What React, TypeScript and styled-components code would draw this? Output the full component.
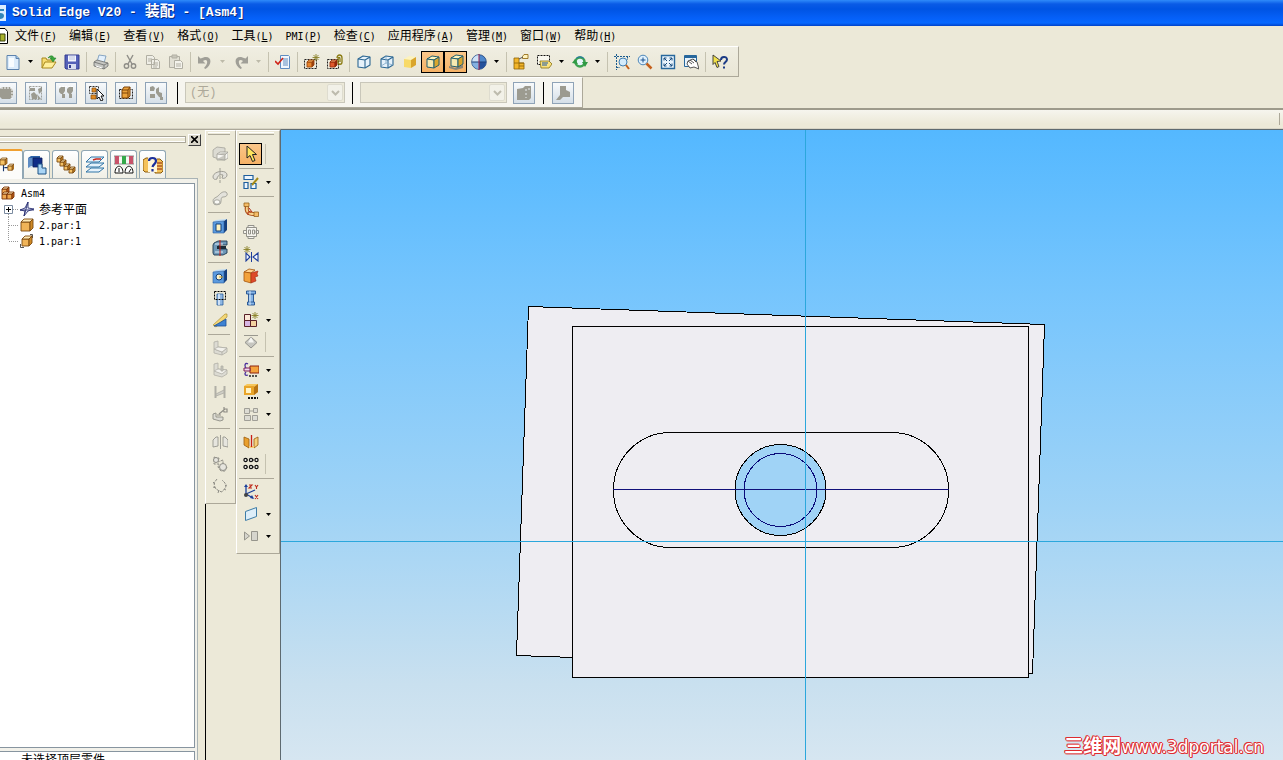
import React from 'react';
import styled, { createGlobalStyle, css } from 'styled-components';

const Global = createGlobalStyle`
  *, *::before, *::after { box-sizing: border-box; }
  html, body { margin: 0; height: 100%; }
  body { background: #ece9d8; overflow: hidden; }
  button, select, ul { margin: 0; padding: 0; }
  button, select { font: inherit; color: inherit; border: 0; background: none; }
`;

const uiFont = '"Liberation Mono", "Noto Sans CJK SC", monospace';

/* ---------- shell ---------- */
const Shell = styled.div`
  display: flex;
  flex-direction: column;
  height: 100vh;
  overflow: hidden;
  font-family: ${uiFont};
  font-size: 12px;
  color: #000;
  background: #ece9d8;
`;
const Latin = styled.span`
  font-family: "DejaVu Sans Mono", monospace;
  font-size: 10px;
`;
const TitleBar = styled.header`
  display: flex;
  align-items: center;
  gap: 6px;
  height: 26px;
  flex: none;
  background: linear-gradient(#2f8bfa 0, #0a5be6 4px, #0054e3 9px, #0560f8 18px, #0668ff 23px, #0042c8 26px);
`;
const TitleText = styled.h1`
  margin: 0;
  font: bold 13px/24px ${uiFont};
  color: #fff;
  white-space: pre;
  text-shadow: 1px 1px 0 #0a2a80;
`;
const Wide = styled.span`
  font-size: 15px;
`;
const MenuBar = styled.nav`
  display: flex;
  align-items: center;
  height: 20px;
  flex: none;
`;
const MenuItem = styled.button`
  padding: 2px 6px 0;
  line-height: 18px;
  white-space: nowrap;
`;
const DocIcon = styled.span`
  width: 9px;
  height: 16px;
  flex: none;
`;

/* ---------- toolbars ---------- */
const ToolRow = styled.div`
  display: flex;
  flex: none;
`;
const Toolbar = styled.div<{ $light?: boolean }>`
  display: flex;
  align-items: center;
  flex: none;
  height: 31px;
  border-top: 1px solid #fff;
  border-bottom: 1px solid #aca899;
  border-right: 1px solid #aca899;
  ${p =>
    p.$light
      ? css`
          padding-right: 8px;
          background: #f6f5ef;
        `
      : css`
          padding: 0 7px 0 1px;
          background: linear-gradient(#f0eee2, #e9e6d5);
        `}
`;
const ToolButton = styled.button<{ $active?: boolean }>`
  display: flex;
  align-items: center;
  justify-content: center;
  width: 23px;
  height: 22px;
  flex: none;
  ${p =>
    p.$active &&
    css`
      background: linear-gradient(#fbc88c, #f5b063);
      outline: 1px solid #000;
      outline-offset: -1px;
    `}
`;
const Drop = styled.button`
  display: flex;
  align-items: center;
  justify-content: center;
  width: 13px;
  height: 22px;
  flex: none;
`;
const VLine = styled.span`
  width: 1px;
  height: 20px;
  margin: 0 2px 0 3px;
  background: #c5c2b0;
  flex: none;
`;
const HLine = styled.span`
  height: 1px;
  margin: 3px 0 2px;
  background: #aca899;
  flex: none;
`;
const BlackLine = styled.span<{ $gap: number }>`
  width: 1px;
  height: 22px;
  margin: 0 ${p => p.$gap}px;
  background: #000;
  flex: none;
`;
const PlateGroup = styled.div`
  display: flex;
  gap: 8px;
  margin-left: -5px;
  margin-right: 3px;
`;
const Plate = styled.button`
  display: flex;
  align-items: center;
  justify-content: center;
  width: 22px;
  height: 22px;
  border: 1px solid #8fa3b7;
  background: linear-gradient(#f8fafb, #d5dfe8);
  flex: none;
`;
const SelectBox = styled.label<{ $w: number }>`
  position: relative;
  display: flex;
  width: ${p => p.$w}px;
  height: 21px;
  margin-right: ${p => (p.$w < 150 ? 6 : 0)}px;
  border: 1px solid #c9c7ba;
  background: #ece9d8;
`;
const Select = styled.select`
  appearance: none;
  width: 100%;
  padding-left: 4px;
  color: #aca899;
  opacity: 1;
  font-size: 12px;
`;
const SelectArrow = styled.span`
  position: absolute;
  top: 1px;
  right: 1px;
  bottom: 1px;
  width: 16px;
  display: flex;
  align-items: center;
  justify-content: center;
  border: 1px solid #dedccf;
  border-radius: 2px;
  background: #f2f1e8;
  pointer-events: none;
`;
const PromptBar = styled.div`
  display: flex;
  flex: none;
  height: 21px;
  padding: 3px 3px 3px 0;
  border-top: 2px solid #9d9a8b;
  border-bottom: 1px solid #d8d5c6;
  background: linear-gradient(#f6f5ee, #ece9d8 14px);
`;
const PromptField = styled.output`
  flex: 1;
  border-right: 1px solid #aca899;
`;

/* ---------- work area ---------- */
const Work = styled.main`
  display: flex;
  flex: 1;
  min-height: 0;
`;
const PathFinder = styled.aside`
  display: flex;
  flex-direction: column;
  width: 205px;
  flex: none;
  padding-right: 4px;
  border-top: 1px solid #aca899;
`;
const PanelHead = styled.div`
  display: flex;
  align-items: center;
  gap: 2px;
  height: 19px;
  flex: none;
`;
const Grip = styled.span`
  flex: 1;
  height: 7px;
  border: solid #aca899;
  border-width: 1px 1px 1px 0;
  background: linear-gradient(#fff 1px, transparent 1px 4px, #fff 4px);
`;
const Close = styled.button`
  display: flex;
  align-items: center;
  justify-content: center;
  width: 13px;
  height: 12px;
  border: 1px solid #404040;
  border-top-color: #fff;
  border-left-color: #fff;
  background: #d8d5c8;
`;
const Tabs = styled.div`
  display: flex;
  align-items: flex-end;
  gap: 2px;
  height: 29px;
  flex: none;
`;
const Tab = styled.button<{ $on?: boolean }>`
  display: flex;
  align-items: center;
  justify-content: center;
  width: 27px;
  height: 28px;
  border: 1px solid #91a7b4;
  border-bottom: 0;
  border-radius: 3px 3px 0 0;
  background: linear-gradient(#fff, #f0efe6);
  ${p =>
    p.$on &&
    css`
      width: 23px;
      height: 30px;
      margin: 0 -2px -1px 0;
      padding-right: 8px;
      border-left: 0;
      border-top: 2px solid #f0a030;
      border-radius: 0 3px 0 0;
      background: #fcfcfa;
      z-index: 1;
    `}
`;
const TabPage = styled.div`
  display: flex;
  flex-direction: column;
  gap: 3px;
  flex: 1;
  min-height: 0;
  margin-right: 3px;
  padding: 4px 2px 0 0;
  border: solid #a9b3b5;
  border-width: 1px 1px 0 0;
  background: #f2f1ea;
`;
const Tree = styled.ul`
  flex: 1;
  min-height: 0;
  padding-top: 1px;
  list-style: none;
  background: #fff;
  border: solid #8795a0;
  border-width: 1px 1px 1px 0;
`;
const Node = styled.li<{ $root?: boolean }>`
  display: flex;
  align-items: center;
  gap: ${p => (p.$root ? 6 : 4)}px;
  height: 16px;
  padding-left: ${p => (p.$root ? 1 : 4)}px;
  white-space: nowrap;
`;
const Message = styled.div`
  height: 9px;
  flex: none;
  overflow: hidden;
  padding-left: 21px;
  line-height: 18px;
  border: solid #8795a0;
  border-width: 1px 1px 0 0;
  background: #fff;
`;
const Docks = styled.div`
  display: flex;
  align-items: stretch;
  flex: none;
  width: 76px;
  border-top: 1px solid #aca899;
  border-right: 1px solid #5e6a70;
`;
const DockColumn = styled.div<{ $w: number }>`
  display: flex;
  flex-direction: column;
  width: ${p => p.$w}px;
  flex: none;
`;
const Dock = styled.div`
  display: flex;
  flex-direction: column;
  padding: 1px 5px 6px 2px;
  border: 1px solid #fff;
  border-right-color: #aca899;
  border-bottom-color: #aca899;
`;
const DockGrip = styled.span`
  height: 3px;
  margin-bottom: 8px;
  border-top: 1px solid #fff;
  border-bottom: 1px solid #aca899;
`;
const DockRow = styled.div`
  display: flex;
  align-items: center;
  height: 22px;
`;
const DockTail = styled.div`
  flex: 1;
  border-left: 1px solid #000;
`;
const Viewport = styled.section`
  position: relative;
  flex: 1;
  min-width: 0;
  overflow: hidden;
  border-top: 1px solid #5e6a70;
  background: linear-gradient(#54b8ff 0, #76c5fd 26%, #9fd3f6 60%, #c9e0ef 88%, #d6e6f1 100%);
`;
const Canvas = styled.svg`
  display: block;
  width: 100%;
  height: 100%;
`;
const Watermark = styled.a`
  position: absolute;
  right: 19px;
  bottom: 2px;
  font: 17px/22px "DejaVu Sans", "Noto Sans CJK SC", sans-serif;
  color: #fff;
  text-decoration: none;
  white-space: nowrap;
  text-shadow: 1px 0 #dd2b30, -1px 0 #dd2b30, 0 1px #dd2b30, 0 -1px #dd2b30, 1px 1px #e5474a, -1px -1px #e5474a;
`;
const WatermarkName = styled.b`
  font-size: 19px;
`;

/* ---------- drawings ---------- */
type BoxProps = { x: number; y: number; s: number; d?: number; f?: string; t?: string; r?: string; l?: string };
const Box = ({ x, y, s, d = 3, f = '#f5c265', t = '#ffeab5', r = '#cf8a26', l = '#7c4a10' }: BoxProps) => (
  <g stroke={l} strokeWidth=".9" strokeLinejoin="round">
    <path d={`M${x} ${y + d}h${s}v${s}h${-s}z`} fill={f} />
    <path d={`M${x} ${y + d}l${d} ${-d}h${s}l${-d} ${d}z`} fill={t} />
    <path d={`M${x + s} ${y + d}l${d} ${-d}v${s}l${-d} ${d}z`} fill={r} />
  </g>
);
const Triangle = ({ off }: { off?: boolean }) => (
  <svg width="5" height="3" viewBox="0 0 5 3"><path d="M0 0h5L2.500 3z" fill={off ? '#bdbaa9' : '#000'} /></svg>
);
const Chevron = () => (
  <svg width="9" height="6" viewBox="0 0 9 6"><path d="M1 1l3.500 3.500L8 1" fill="none" stroke="#bdbbad" strokeWidth="2" /></svg>
);

const G = '#8f8e88';
const glassCube = (inner: boolean) => (
  <g fill="#e6f2fb" stroke="#2c6692" strokeWidth="1.100" strokeLinejoin="round">
    <path d="M2 5l5-3 7 1v8l-5 3-7-1z" />
    <path d="M2 5l7 1 5-3M9 6v8" fill="none" />
    {inner && <path d="M2 12l5-3 7 2M7 2v7" fill="none" stroke="#7ba6c6" strokeWidth=".8" />}
  </g>
);
const solidCube = (edges: boolean) => (
  <g stroke={edges ? '#236070' : 'none'} strokeLinejoin="round">
    <path d="M2 5l5-3 7 1-5 3z" fill="#fdf3bd" />
    <path d="M2 5l7 1v8l-7-1z" fill={edges ? '#f7e9b0' : '#f8da68'} />
    <path d="M9 6l5-3v8l-5 3z" fill="#d9a52c" />
  </g>
);
const plateBlue = (hole: React.ReactNode) => (
  <>
    <path d="M1 4l3-2 11-1-3 2z" fill="#b9daf8" />
    <path d="M12 3l3-2v11l-3 3z" fill="#16407e" />
    <path d="M1 4l11-1v12l-11 0z" fill="#5b9ade" stroke="#2a5d9f" strokeWidth=".6" />
    {hole}
  </>
);
const star = <path d="M12 0v7M8.500 3.500h7M9.500 1l5 5M14.500 1l-5 5" stroke="#8a8128" strokeWidth=".9" />;

const art: Record<string, React.ReactNode> = {
  file: <><path d="M2 1.500h9l3 3v11H2z" fill="#dcecfb" stroke="#5d83ad" /><path d="M4 4h5v9H4z" fill="#f8fcff" /><path d="M11 1.500v3h3" fill="#9cc2e6" stroke="#5d83ad" /></>,
  open: <><path d="M1 14V4h4l1 2h6v2" fill="#f7dc72" stroke="#a8881c" /><path d="M1 14l3-6h11l-4 6z" fill="#ffef9b" stroke="#a8881c" /><path d="M7 4c2-3 5-3 6 0h2l-3 4-3-4h2c-1-1-2-1-4 0z" fill="#39a63b" stroke="#1a7a24" strokeWidth=".5" /></>,
  save: <><path d="M1 1h14v14H2l-1-1z" fill="#5560b8" stroke="#343c90" /><path d="M4 1.500h8v6H4z" fill="#f4f6ff" /><path d="M5 3h6M5 5h6" stroke="#b9c0dd" /><path d="M4 10h8v5H4z" fill="#dadef0" /><path d="M5 11h2v3H5z" fill="#343c90" /></>,
  print: <><path d="M4 8l2-7 7 1-2 7z" fill="#e3f0fc" stroke="#6f93b8" strokeWidth=".8" /><path d="M1 8l3-2 11 3v3l-4 3-10-3z" fill="#c6c7c3" stroke="#6b6c69" strokeWidth=".8" /><path d="M1 8l10 3 4-2M11 11v4" fill="none" stroke="#6b6c69" strokeWidth=".8" /><path d="M3 12l6 2" stroke="#fff" /></>,
  cut: <g fill="none" stroke={G} strokeWidth="1.400"><path d="M5 1l5 9M11 1L6 10" /><circle cx="4.500" cy="12" r="2.200" /><circle cx="11.500" cy="12" r="2.200" /></g>,
  copy: <g fill="#efeee6" stroke="#b1afa3"><path d="M1.500 1.500h6l2 2v7h-8zM6.500 5.500h6l2 2v7h-8z" /><path d="M3 5h4M3 7h3M8 9h5M8 11h5M8 13h4" /></g>,
  paste: <g fill="#e2e0d4" stroke="#b1afa3"><path d="M1.500 2.500h10v11h-10z" /><path d="M4 1h5v3H4z" fill="#c8c6ba" /><path d="M6.500 6.500h6l2 2v6h-8z" fill="#f4f3ec" /><path d="M8 10h5M8 12h5" /></g>,
  undo: <path d="M1 2v7.500h7.500L6 7c4-3 6.500 1 1 7l1.500 1C17 9 14-1 3.500 4.500z" fill="#a09f97" />,
  redo: <path d="M15 2v7.500H7.500L10 7C6 4 3.500 8 9 14l-1.500 1C-1 9 2-1 12.500 4.500z" fill="#a09f97" />,
  props: <><path d="M5.500 1.500h8l1 1v12h-9z" fill="#f2f7fd" stroke="#5f8cc0" /><path d="M8 5h5M8 7h5M8 9h5M8 11h5" stroke="#5f8cc0" /><path d="M0 7l3 3 5-6" fill="none" stroke="#d02418" strokeWidth="1.600" /></>,
  partNew: <><path d="M.5 5.500h12v9H.5z" fill="none" stroke="#222" strokeDasharray="2 1" /><Box x={3} y={6} s={5} d={2} f="#e8842a" t="#f6b060" r="#93380a" l="#a04a10" />{star}</>,
  partPin: <><path d="M.5 5.500h11v9H.5z" fill="none" stroke="#222" strokeDasharray="2 1" /><Box x={3} y={6} s={5} d={2} f="#e0582c" t="#f0a070" r="#8d200a" l="#98300c" /><path d="M10 4c0-4 5-4 5 0v4c0 3-4 3-4 0V5c0-2 2-2 2 0v3" fill="none" stroke="#8a7a10" strokeWidth="1.300" /></>,
  wire: glassCube(false),
  wireHidden: glassCube(true),
  shaded: solidCube(false),
  shadedEdges: solidCube(true),
  shadow: <><path d="M1 12l6 2 8-3v3l-7 2-7-2z" fill="#8b8577" /><g transform="translate(1 -1)">{solidCube(true)}</g></>,
  sphere: <><circle cx="8" cy="8" r="7.300" fill="#4f88cc" stroke="#1b3e78" strokeWidth=".8" /><path d="M8 1a7 7 0 0 0-7 7h7z" fill="#cfe2f6" /><path d="M1 8a7 7 0 0 0 7 7V8z" fill="#85b0e0" /><path d="M8 8h7a7 7 0 0 1-7 7z" fill="#24509a" /><path d="M1 8h14" stroke="#1b3e78" /><path d="M8 0v16" stroke="#a3224b" /></>,
  parts: <><path d="M1 4h5v5h5v6H1z" fill="#f3b62b" stroke="#8d6206" strokeWidth=".8" /><path d="M1 9h5v6M6 9h5M6 12h5" fill="none" stroke="#8d6206" strokeWidth=".8" /><path d="M9.500 2.500l1.500-2h4v4h-5.500z" fill="#fff3bd" stroke="#8d6206" strokeWidth=".8" /><path d="M6 5l4-2" stroke="#555" /></>,
  selectTool: <><path d="M1.500 1.500h12v9h-12z" fill="#f8f7ef" stroke="#111" strokeDasharray="2 1" /><path d="M4 7h9l3 3-3 4H5z" fill="#fae27d" stroke="#86700f" strokeWidth=".8" /><path d="M6 9h6M6 11h5" stroke="#1d57a8" /></>,
  refresh: <><circle cx="8" cy="8" r="4.500" fill="#e8f5fb" stroke="#3fa352" strokeWidth="2.600" /><path d="M0 9l3-4 3 5zM16 8l-3 5-3-5z" fill="#2f9a44" /><path d="M4 4.500a5.500 5.500 0 0 1 8 0" stroke="#1c6fb0" fill="none" /></>,
  zoomArea: <><path d="M2.500 0v16M0 2.500h16M2.500 13.500H6M13.500 2.500V6" stroke="#1c5c8e" strokeDasharray="2 1" fill="none" /><circle cx="9" cy="8" r="4" fill="#d4ebfb" stroke="#3f7fb5" /><path d="M12 11l3 4" stroke="#c5601b" strokeWidth="2" /></>,
  zoom: <><circle cx="6" cy="6" r="4.800" fill="#dff0fc" stroke="#4d86b8" /><path d="M3.500 6h5M6 3.500v5" stroke="#1b5290" /><path d="M9.500 9.500l5 5" stroke="#c5601b" strokeWidth="2.500" /></>,
  fit: <><path d="M1.500 1.500h13v13h-13z" fill="#e8f3fc" stroke="#27679c" strokeWidth="1.400" /><path d="M4 4l3 3M12 4L9 7M4 12l3-3M12 12L9 9M4 6.500V4h2.500M9.500 4H12v2.500M4 9.500V12h2.500M9.500 12H12V9.500" fill="none" stroke="#164a7c" /></>,
  pan: <><path d="M1.500 1.500h12v11h-12z" fill="#e8f3fc" stroke="#27679c" /><path d="M1 3h13" stroke="#27679c" strokeWidth="2" /><path d="M5 7l5-2 4 3 2 7-5-2-4 1-3-4z" fill="#fff" stroke="#444" strokeWidth=".9" /><path d="M5 7l4 3M7 6l4 3M10 5l3 3" stroke="#444" strokeWidth=".9" /></>,
  help: <><path d="M1 1l8 6-4 .5 2 5-2 1-2-5-2 2z" fill="#f3e24b" stroke="#333" strokeWidth=".9" /><path d="M9 6c0-4 6-4 6-.500 0 2.500-3 2.500-3 5M12 12.500v2" fill="none" stroke="#1c3c86" strokeWidth="2" /></>,
  pointer: <path d="M4 0v12l3-2.500 2.500 6 2.500-1-2.500-6h4z" fill="#ffe45c" stroke="#222" />,
  sketch: <g fill="#eef6fd" stroke="#1f5f9d" strokeWidth="1.200"><path d="M1 1.500h9v4H1zM1 8.500h4v6H1zM8 9.500h5v5H8z" /><path d="M9 11l6-7" stroke="#a68b15" strokeWidth="2" /></g>,
  pipes: <g><path d="M4 4c-1 5 0 8 7 8" stroke="#a84a14" strokeWidth="4" fill="none" /><path d="M4 4c-1 5 0 8 7 8" stroke="#f8d28a" strokeWidth="2" fill="none" /><path d="M1 1h5v3.500H1zM11 10h4.500v4.500H11z" fill="#f5bd68" stroke="#96601a" strokeWidth=".8" /><path d="M6 6l3 4M5 13v-3h3" stroke="#b02a10" fill="none" /></g>,
  connector: <g fill="#f6f5ef" stroke="#93928b"><path d="M3.500 3.500h10v9h-10zM.5 6.500h3v3h-3zM13 6.500h2.500v3H13zM5 1.500h6v2H5zM5 12.500h6v2H5z" /><path d="M5.500 6h2v4h-2zM9.500 6h2v4h-2z" /></g>,
  mirrorNew: <><path d="M4 0v7M.5 3.500h7M1.500 1l5 5M6.500 1l-5 5" stroke="#8a8128" strokeWidth=".9" /><path d="M3 7v8l4-4zM15 7v8l-5-4z" fill="#f0f6ff" stroke="#1c3c9c" strokeWidth="1.100" /><path d="M8.500 6v10" stroke="#1c3c9c" /></>,
  clash: <><path d="M1 4l5-3 6 1-4 3z" fill="#ffd391" stroke="#a4540c" strokeWidth=".8" /><path d="M1 4l7 1v10l-7-2z" fill="#f2a23c" stroke="#a4540c" strokeWidth=".8" /><path d="M8 5l7-2-1 3 1 2-3 1 1 4-5 2z" fill="#dd4a28" stroke="#a02a10" strokeWidth=".6" /></>,
  bolt: <g fill="#86b5e6" stroke="#1f4f8e" strokeWidth=".9"><path d="M5.500 4h5v9h-5z" /><path d="M3.500 1h9v3h-9zM4.500 12h7v3h-7z" /><path d="M7 1v14" stroke="#e8f3ff" /></g>,
  pattern: <><g fill="#fbe8d8" stroke="#592028" strokeWidth="1"><path d="M1.500 2.500h6v6h-6zM1.500 8.500h6v6h-6zM7.500 8.500h6v6h-6z" /></g><path d="M2 9h5v5H2z" fill="#d8b6e4" /><path d="M8 9h5v5H8z" fill="#f3d2a0" />{star}</>,
  diamond: <><path d="M1 1.500h14" stroke="#99988f" /><path d="M8 3l6 5.500L8 14 2 8.500z" fill="#c6c6c0" stroke="#83837d" strokeWidth=".8" /><path d="M8 3L5 8.500h6z" fill="#f6f6f2" /></>,
  drag: <><path d="M7 4h9v7H7z" fill="#f4a23c" stroke="#8c2210" /><path d="M1 6h6v3H1z" fill="#f1d7ee" stroke="#7b1d53" /><path d="M5 2c-3-2-4 2-2 4M5 13c-3 1-4-1-2-3" fill="none" stroke="#4a2f9c" strokeWidth="1.300" /><path d="M6 14h9" stroke="#222" strokeWidth="1.500" strokeDasharray="2 1" /></>,
  move: <><path d="M1 2l3-2h11v8l-4 3H1z" fill="#f6c65a" /><path d="M11 3l4-3v8l-4 3z" fill="#b87413" /><path d="M1 2h10v9H1z" fill="#e9a52a" /><path d="M3 4h5v5H3z" fill="#fff3c8" /><path d="M5 14h10" stroke="#111" strokeWidth="2" strokeDasharray="2 1" /></>,
  replace: <g fill="#dddcd4" stroke="#a09f97"><path d="M1.500 2.500h5v5h-5zM1.500 9.500h6v5h-6zM9.500 9.500h5v5h-5zM10.500 2.500h4v4h-4z" /><path d="M6 5h4" /></g>,
  sheet: <><path d="M1 3l5 2v9l-5-3z" fill="#e9a02d" stroke="#9c5c0c" strokeWidth=".8" /><path d="M15 3l-4 2v9l4-3z" fill="#f6cf79" stroke="#9c5c0c" strokeWidth=".8" /><path d="M6 12h5v2H6z" fill="#f6cf79" /><path d="M8.500 1v12" stroke="#c81d14" strokeWidth="1.300" /></>,
  grid: <g fill="#f4f3ee" stroke="#111" strokeWidth="1.200"><path d="M2 4h12M2 11h12" strokeDasharray="1 1" /><circle cx="2.500" cy="4" r="1.600" /><circle cx="8" cy="4" r="1.600" /><circle cx="13.500" cy="4" r="1.600" /><circle cx="2.500" cy="11" r="1.600" /><circle cx="8" cy="11" r="1.600" /><circle cx="13.500" cy="11" r="1.600" /></g>,
  axes: <g fill="none"><path d="M3 10V2M3 10l7 4M3 10l9-4" stroke="#1b3f9a" strokeWidth="1.300" /><path d="M1 3l2-3 2 3M9 11l2 4-4-1" fill="#1b3f9a" /><path d="M6 1h3L6 4h3M12 1l1.500 2L15 1M13.500 3v2M12 11l3 4M15 11l-3 4" stroke="#bf2b1c" strokeWidth="1.100" /><circle cx="3" cy="11" r="2" fill="#444" /></g>,
  plane: <path d="M2.500 5.500l11-4v9l-11 4z" fill="#ddeef9" stroke="#3e7da8" />,
  play: <g fill="#d6d5cd" stroke="#96958c"><path d="M1.500 4l5 4-5 4z" /><path d="M8.500 3.500h6v9h-6z" /></g>,
  extrudeOff: <g fill="#dcdbd3" stroke="#a3a29a" strokeWidth=".8"><path d="M1 4l4-3 8 1v4l-6 1v6l-6-2z" /><path d="M5 8l3-2 8 0v6l-3 2-8 0z" fill="#f6f5f1" /><path d="M5 8l8 1 3-3M13 9v5l-8-1" fill="#c9c8c0" /></g>,
  revolveOff: <g fill="#e3e2db" stroke="#96958d" strokeWidth=".9"><path d="M1 9c0-6 14-8 14-2 0 3-4 4-5 3l1-3c-3-1-6 1-6 4-2 1-4 0-4-2z" /><path d="M8 0v16" strokeDasharray="3 1" /></g>,
  sweepOff: <g fill="#e3e2db" stroke="#96958d" strokeWidth=".8"><path d="M2 14c-3-6 2-6 4-8s4-5 8-4c3 3 0 5-3 5s-1 5-3 7c-2 1-5 1-6 0z" /><ellipse cx="5" cy="12" rx="3" ry="2.200" fill="#fafaf6" /></g>,
  cutout: plateBlue(<path d="M4 6h5v7H4z" fill="#fff3c0" stroke="#123f78" />),
  groove: <><path d="M2 3l4-2h9v4H7v4h8v4l-4 2H2l-1-2V5z" fill="#6f98b8" stroke="#1d3950" strokeWidth=".9" /><path d="M5 6h9v3H5z" fill="#1b2c38" /><path d="M3 4h8M3 12h8" stroke="#dcebf7" /><path d="M8 0v16" stroke="#c81d14" /></>,
  hole: plateBlue(<><circle cx="7" cy="9" r="3" fill="#fbf2cc" stroke="#123f78" /><path d="M7 9h4" stroke="#c89a20" /></>),
  thread: <><path d="M5 4h6v11H5z" fill="#8fb7e2" stroke="#2a5d9f" strokeWidth=".8" /><path d="M7 4v11" stroke="#e8f3ff" strokeWidth="1.400" /><path d="M2.500 1.500h11v8h-11z" stroke="#000" strokeDasharray="2 1" fill="none" /></>,
  chamfer: <><path d="M1 13L13 2h2v3L4 15z" fill="#f3d777" stroke="#a58420" strokeWidth=".6" /><path d="M2 14l12-7v7z" fill="#3d82d2" stroke="#1d4f94" strokeWidth=".8" /></>,
  bracketOff: <g fill="#dcdbd3" stroke="#b0afa6" strokeWidth=".8"><path d="M2 2l4-1v6l9 1v4l-5 3-8-2z" /><path d="M2 9l8 3 5-4M10 12v3" fill="none" /><path d="M6 7l9 1-5 4-8-3z" fill="#f2f1ec" /></g>,
  bracketOff2: <g fill="#dcdbd3" stroke="#b0afa6" strokeWidth=".8"><path d="M2 2l4-1v6l9 1v4l-5 3-8-2z" /><path d="M6 7l9 1-5 4-8-3z" fill="#f2f1ec" /><path d="M9 4h2v5H9z" fill="#c4c3ba" /></g>,
  ladderOff: <g fill="#d0cfc7" stroke="#b0afa6" strokeWidth=".9"><path d="M3.500 2v12M12.500 2v12" strokeWidth="2" /><path d="M4 10l8-4v3l-8 3z" /></g>,
  filletOff: <g fill="#dcdbd3" stroke="#8f8e86" strokeWidth=".9"><path d="M1 8l3-1v4h7v3l-3 1-7-2z" /><path d="M7 8l6-5M12 1v5h3V3h-3M5 9h4" fill="none" strokeWidth="1.200" /></g>,
  mirrorOff: <g fill="#e6e5de" stroke="#96958d" strokeWidth=".9"><path d="M1 13V6l3-3h2v9zM16 13V6l-3-3h-2v9z" /><path d="M8.500 1v14" /></g>,
  gearsOff: <g fill="#e6e5de" stroke="#8f8e86"><path d="M2 1l3 1 2 0-1 4 5-2 0 5 4 2-2 4-4 0-3-4 1-3-5 0z" fill="none" strokeDasharray="3 1" /><circle cx="4" cy="4" r="2.500" /><circle cx="11" cy="11" r="3.500" /></g>,
  sparksOff: <path d="M5 1L2 5l1 5 4 3 3 1 4-5-1-4-3-3M1 4l2 2M1 9l3 1M6 15l1-3M15 7l-2 1M14 12l-2-1" fill="none" stroke="#8f8e86" strokeDasharray="3 1" />,
  tree: <><path d="M5 11H9M4 7v8" fill="none" stroke="#17356b" strokeWidth="1.300" /><Box x={0} y={0} s={6} d={2} /><Box x={9} y={7} s={5} d={2} /></>,
};

const tall: Record<string, React.ReactNode> = {
  libs: <><path d="M1 3l3-2h9v10H4l-3 2z" fill="#2d62a8" /><path d="M1 4h7M1 6h7M1 8h7M1 10h7M1 12h5" stroke="#a8cbee" strokeWidth=".8" /><path d="M6 3h9v9H6z" fill="#0f2c86" stroke="#0a1d58" strokeWidth=".8" /><path d="M11 9h4v4h4v6h-8z" fill="#a9d4f5" stroke="#1c5284" /></>,
  family: <g><Box x={1} y={1} s={4} d={2} /><Box x={4} y={5} s={4} d={2} /><Box x={8} y={9} s={4} d={2} /><Box x={13} y={12} s={4} d={2} /></g>,
  layers: <g fill="#e6f2fb" stroke="#2f74a6"><path d="M1 17l5-4h13l-5 4zM1 12l5-4h13l-5 4zM1 7l5-5h13l-5 5z" /><path d="M8 5l3-1h5" stroke="#c8271d" strokeWidth="1.500" fill="none" /></g>,
  sensors: <><path d="M0 1h20v8H0z" fill="#f4fbf4" stroke="#4c4c4c" strokeWidth=".6" /><path d="M1 1h4v8H1zM15 1h4v8h-4z" fill="#c8526a" /><path d="M8 1h4v8H8z" fill="#35a94a" /><path d="M1 18c0-9 8-9 8 0zM11 18c0-9 8-9 8 0z" fill="#fff" stroke="#111" /><path d="M5 17V13M15 17l2-3" stroke="#111" /></>,
  playHelp: <><path d="M0 5l3-2h4v14H2l-2-2zM12 4h5l3 3v9l-2 2h-6z" fill="#f5c25a" stroke="#8b5a0b" /><path d="M13 8h6M13 11h6M13 14h6" stroke="#8b1f10" /><path d="M5 2h9v15H5z" fill="#fff6d9" /><path d="M6 6c0-4 7-4 7 0 0 3-3 3-3.500 6M9.500 14v2.500" fill="none" stroke="#1b2f9c" strokeWidth="2.200" /></>,
};

const Icon = ({ name }: { name: string }) => (
  <svg width="16" height="16" viewBox="0 0 16 16" fill="none" aria-hidden="true">{art[name]}</svg>
);
const TabIcon = ({ name }: { name: string }) => (
  <svg width="20" height="20" viewBox="0 0 20 20" fill="none" aria-hidden="true">{tall[name]}</svg>
);

const PM = '#9c9b90';
const plates: Record<string, [string, React.ReactNode]> = {
  all: ['选择全部', <><path d="M1 5l3-3h8l3 3v6l-3 3H4l-3-3z" fill={PM} /><path d="M3 3h11v11" fill="none" stroke="#fff" strokeDasharray="2 1" /></>],
  visible: ['选择可见', <><path d="M2 3h5v3H2zM3 9l3-2 3 3v4H4zM10 4l4-2v4l-3 3zM9 9l4 5h-3z" fill={PM} /><path d="M1.500 1.500h12v13h-12z" fill="none" stroke="#8b8b84" strokeDasharray="2 1" strokeWidth=".8" /></>],
  inner: ['选择内部', <><path d="M1 4l2-2h4v4l-2 3H3L1 7zM9 4l2-2h4v4l-2 3h-2L9 7zM4 9h3v4H4zM11 9h3v4h-3z" fill={PM} /><path d="M1 1.500h14" stroke="#fff" strokeDasharray="2 1" /></>],
  component: ['选择零部件', <><path d="M1.500 1.500h9v7h-9z" fill="none" stroke="#333" strokeDasharray="2 1" /><path d="M4 3h4v4H4zM3 10h5v4H3z" fill="#e08a22" stroke="#864a08" strokeWidth=".7" /><path d="M9 4v10l2-2 2 4 2-1-2-4h3z" fill="#fff" stroke="#111" /></>],
  box: ['选择框', <><path d="M1.500 4.500h13v9h-13z" fill="none" stroke="#222" strokeDasharray="2 1" /><path d="M4 5l2-3h6v9l-2 2H4z" fill="#eba23b" stroke="#7c4308" /><path d="M4 5h6l2-3M10 5v8M4 8h6" fill="none" stroke="#7c4308" /></>],
  small: ['选择小零件', <><path d="M2 2l3-1 2 2-1 3H2zM2 9h5v4H2zM8 4l3-2v5l3 1v5l-3-1-3-4zM12 12h3v3h-3z" fill={PM} /></>],
};

const main: [string, string][] = [
  ['file', '新建'], ['v', ''], ['open', '打开'], ['save', '保存'], ['|', ''], ['print', '打印'], ['|', ''],
  ['cut', '剪切'], ['copy', '复制'], ['paste', '粘贴'], ['|', ''], ['undo', '撤消'], ['x', ''], ['redo', '重做'], ['x', ''], ['|', ''],
  ['props', '属性'], ['|', ''], ['partNew', '新建零件'], ['partPin', '链接零件'], ['|', ''],
  ['wire', '线框'], ['wireHidden', '隐藏线'], ['shaded', '着色'], ['shadedEdges', '带边着色'], ['shadow', '阴影'], ['sphere', '视图'], ['v', ''], ['|', ''],
  ['parts', '零件'], ['selectTool', '选择'], ['v', ''], ['refresh', '刷新'], ['v', ''], ['|', ''],
  ['zoomArea', '区域缩放'], ['zoom', '缩放'], ['fit', '适合'], ['pan', '平移'], ['|', ''], ['help', '帮助'],
];
const dockA = ['extrudeOff', 'revolveOff', 'sweepOff', '-', 'cutout', 'groove', '-', 'hole', 'thread', 'chamfer', '-', 'bracketOff', 'bracketOff2', 'ladderOff', 'filletOff', '-', 'mirrorOff', 'gearsOff', 'sparksOff'];
const dockB = ['pointer|', '-', 'sketch>', '-', 'pipes', 'connector', 'mirrorNew', 'clash', 'bolt', 'pattern>', 'diamond|', '-', 'drag>', 'move>', 'replace>', '-', 'sheet', 'grid|', '-', 'axes', 'plane>', 'play>'];
const menus: [string, string][] = [
  ['文件', 'F'], ['编辑', 'E'], ['查看', 'V'], ['格式', 'O'], ['工具', 'L'], ['PMI', 'P'],
  ['检查', 'C'], ['应用程序', 'A'], ['管理', 'M'], ['窗口', 'W'], ['帮助', 'H'],
];
const tabs: [string, string][] = [
  ['libs', '零件库'], ['family', '族'], ['layers', '层'], ['sensors', '传感器'], ['playHelp', '回放'],
];

const DockButtons = ({ items }: { items: string[] }) => (
  <>
    {items.map((item, i) => {
      if (item === '-') return <HLine key={i} />;
      const name = item.replace(/[|>]/, '');
      return (
        <DockRow key={i}>
          <ToolButton $active={name === 'pointer'} aria-label={name}><Icon name={name} /></ToolButton>
          {item.endsWith('>') && <Drop aria-label={`${name} 选项`}><Triangle /></Drop>}
          {item.endsWith('|') && <VLine />}
        </DockRow>
      );
    })}
  </>
);

const PlateButton = ({ id }: { id: string }) => (
  <Plate aria-label={plates[id][0]}><svg width="16" height="16" viewBox="0 0 16 16">{plates[id][1]}</svg></Plate>
);

export default function App() {
  return (
    <Shell>
      <Global />
      <TitleBar>
        <svg width="6" height="16" viewBox="0 0 6 16"><path d="M0 0h6v16H0z" fill="#dbeeff" /><path d="M0 4h4v2H0zM0 8c3 0 4 1 4 3s-2 3-4 3z" fill="#3186b8" /></svg>
        <TitleText>Solid Edge V20 - <Wide>装配</Wide> - [Asm4]</TitleText>
      </TitleBar>
      <MenuBar>
        <DocIcon>
          <svg width="9" height="16" viewBox="0 0 9 16"><path d="M0 .5h5l2.500 3v12H0" fill="#fff" stroke="#000" /><path d="M0 6h5v7H0z" fill="#a8b22c" stroke="#38400c" /></svg>
        </DocIcon>
        {menus.map(([label, key]) => (
          <MenuItem key={key}>
            {label === 'PMI' ? <Latin>PMI</Latin> : label}<Latin>(<u>{key}</u>)</Latin>
          </MenuItem>
        ))}
      </MenuBar>
      <ToolRow>
        <Toolbar role="toolbar" aria-label="主工具条">
          {main.map(([name, label], i) => {
            if (name === '|') return <VLine key={i} />;
            if (name === 'v' || name === 'x') return <Drop key={i} aria-label="更多" disabled={name === 'x'}><Triangle off={name === 'x'} /></Drop>;
            return (
              <ToolButton key={i} aria-label={label} $active={name === 'shadedEdges' || name === 'shadow'}><Icon name={name} /></ToolButton>
            );
          })}
        </Toolbar>
      </ToolRow>
      <ToolRow>
        <Toolbar $light role="toolbar" aria-label="选择条">
          <PlateGroup>{Object.keys(plates).map(id => <PlateButton key={id} id={id} />)}</PlateGroup>
          <BlackLine $gap={7} />
          <SelectBox $w={160}>
            <Select aria-label="配置" disabled><option>(无)</option></Select>
            <SelectArrow><Chevron /></SelectArrow>
          </SelectBox>
          <BlackLine $gap={7} />
          <SelectBox $w={147}>
            <Select aria-label="显示" disabled><option> </option></Select>
            <SelectArrow><Chevron /></SelectArrow>
          </SelectBox>
          <Plate aria-label="保存配置"><svg width="16" height="16" viewBox="0 0 16 16"><path d="M1 4l6-1 2-2h6v12l-2 2H1z" fill={PM} /><path d="M10 4v9M13 3v2" stroke="#e8edf1" strokeDasharray="2 2" /></svg></Plate>
          <BlackLine $gap={8} />
          <Plate aria-label="激活"><svg width="16" height="16" viewBox="0 0 16 16"><path d="M5 1h6v4l4 2v5H8l-3 3H1l4-5z" fill={PM} /></svg></Plate>
        </Toolbar>
      </ToolRow>
      <PromptBar><PromptField /></PromptBar>
      <Work>
        <PathFinder>
          <PanelHead>
            <Grip />
            <Close aria-label="关闭"><svg width="7" height="7" viewBox="0 0 7 7"><path d="M0 0l7 7M7 0L0 7" stroke="#000" strokeWidth="1.600" /></svg></Close>
          </PanelHead>
          <Tabs role="tablist">
            <Tab $on role="tab" aria-selected aria-label="路径查找器"><Icon name="tree" /></Tab>
            {tabs.map(([name, label]) => <Tab key={name} role="tab" aria-label={label}><TabIcon name={name} /></Tab>)}
          </Tabs>
          <TabPage>
            <Tree role="tree">
              <Node $root role="treeitem">
                <svg width="14" height="14" viewBox="0 0 14 14"><Box x={1} y={1} s={5} d={2} f="#f0a850" r="#c0601a" l="#7a3408" /><Box x={1} y={6} s={5} d={2} f="#f0a850" r="#c0601a" l="#7a3408" /><Box x={6} y={6} s={5} d={2} f="#f0a850" r="#c0601a" l="#7a3408" /></svg>
                <Latin>Asm4</Latin>
              </Node>
              <Node role="treeitem">
                <svg width="31" height="16" viewBox="0 0 31 16">
                  <path d="M4.500 13v3M9 8.500h5" stroke="#999" strokeDasharray="1 1" />
                  <path d="M.5 4.500h8v8h-8z" fill="#fff" stroke="#7b8ba0" /><path d="M2 8.500h5M4.500 6v5" stroke="#000" />
                  <path d="M24 1l0 6 6 1-6 2-4 5 1-5-5-1 5-2zM16 9h14M24 1l-4 14" fill="#e6e9fa" stroke="#2b3274" strokeWidth=".9" />
                </svg>
                参考平面
              </Node>
              <Node role="treeitem">
                <svg width="31" height="16" viewBox="0 0 31 16"><path d="M4.500 0v16M5 8.500h9" stroke="#999" strokeDasharray="1 1" /><Box x={17} y={2} s={9} d={3} f="#f0b458" /></svg>
                <Latin>2.par:1</Latin>
              </Node>
              <Node role="treeitem">
                <svg width="31" height="16" viewBox="0 0 31 16"><path d="M4.500 0v8M5 8.500h10" stroke="#999" strokeDasharray="1 1" /><path d="M26 1.500h2.500V5M16.500 11v3.500H20" fill="none" stroke="#555" /><Box x={18} y={3} s={7} d={3} f="#f0b458" /></svg>
                <Latin>1.par:1</Latin>
              </Node>
            </Tree>
            <Message>未选择顶层零件</Message>
          </TabPage>
        </PathFinder>
        <Docks>
          <DockColumn $w={31}>
            <Dock><DockGrip /><DockButtons items={dockA} /></Dock>
            <DockTail />
          </DockColumn>
          <DockColumn $w={44}>
            <Dock><DockGrip /><DockButtons items={dockB} /></Dock>
          </DockColumn>
        </Docks>
        <Viewport>
          <Canvas role="img" aria-label="装配视图">
            <g shapeRendering="crispEdges" stroke="#000" fill="#eeedf2">
              <path d="M247.500 176.500L763.500 194.500L751.500 543.500L235.500 525.500z" />
              <rect x="291.500" y="196.500" width="456" height="351" />
              <rect x="332.500" y="302.500" width="335" height="115" rx="57" />
              <circle cx="499.500" cy="360" r="45.500" fill="#a0d3f6" />
              <circle cx="499.500" cy="360" r="36.500" fill="none" stroke="#0a0a7a" />
            </g>
            <rect x="332" y="359" width="336" height="1" fill="#10107a" />
            <rect x="524" y="0" width="1" height="100%" fill="#2ba7dc" />
            <rect x="0" y="411" width="100%" height="1" fill="#2ba7dc" />
          </Canvas>
          <Watermark href="#"><WatermarkName>三维网</WatermarkName>www.3dportal.cn</Watermark>
        </Viewport>
      </Work>
    </Shell>
  );
}
